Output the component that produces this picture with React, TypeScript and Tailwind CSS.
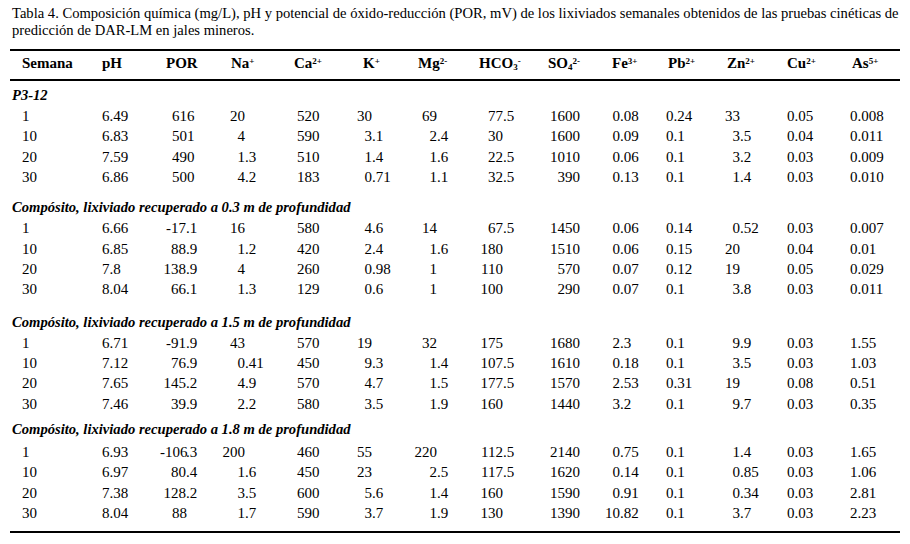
import type { ReactNode } from "react";

type Col = {
  head: ReactNode;
  headCls: string;
  // "left": plain left aligned cell; "dec": integer part right aligned in a box (decimal tab)
  mode: "left" | "dec";
  cellCls: string;
  intCls?: string;
  intLeftCls?: string;
};

const cols: Col[] = [
  { head: "Semana", headCls: "pl-[12px]", mode: "left", cellCls: "pl-[12px]" },
  { head: "pH", headCls: "pl-[7px]", mode: "left", cellCls: "pl-[7px]" },
  { head: "POR", headCls: "pl-[6px]", mode: "dec", cellCls: "", intCls: "w-[26px]", intLeftCls: "pl-[12px]" },
  { head: <>Na<sup className="text-[9px]">+</sup></>, headCls: "pl-[9px]", mode: "dec", cellCls: "", intCls: "w-[23px]" },
  { head: <>Ca<sup className="text-[9px]">2+</sup></>, headCls: "pl-[4px]", mode: "left", cellCls: "pl-[7px]" },
  { head: <>K<sup className="text-[9px]">+</sup></>, headCls: "pl-[13px]", mode: "dec", cellCls: "", intCls: "w-[22px]" },
  { head: <>Mg<sup className="text-[9px]">2-</sup></>, headCls: "pl-[8px]", mode: "dec", cellCls: "", intCls: "w-[27px]" },
  {
    head: <>HCO<sub className="text-[9px]">3</sub><sup className="text-[9px]">-</sup></>,
    headCls: "pl-[9px]",
    mode: "dec",
    cellCls: "",
    intCls: "w-[33px]",
  },
  {
    head: <>SO<sub className="text-[9px]">4</sub><sup className="text-[9px]">2-</sup></>,
    headCls: "pl-[8px]",
    mode: "dec",
    cellCls: "",
    intCls: "w-[40px]",
  },
  { head: <>Fe<sup className="text-[9px]">3+</sup></>, headCls: "pl-[12px]", mode: "dec", cellCls: "", intCls: "w-[20px]" },
  { head: <>Pb<sup className="text-[9px]">2+</sup></>, headCls: "pl-[8px]", mode: "left", cellCls: "pl-[6px]" },
  { head: <>Zn<sup className="text-[9px]">2+</sup></>, headCls: "pl-[7px]", mode: "dec", cellCls: "", intCls: "w-[20px]" },
  { head: <>Cu<sup className="text-[9px]">2+</sup></>, headCls: "pl-[7px]", mode: "left", cellCls: "pl-[7px]" },
  { head: <>As<sup className="text-[9px]">5+</sup></>, headCls: "pl-[12px]", mode: "left", cellCls: "pl-[10px]" },
];

const sections = [
  {
    title: "P3-12",
    wrap: "mt-[3px]",
    head: "h-[22px] leading-[22px]",
    rows: [
      ["1", "6.49", "616", "20", "520", "30", "69", "77.5", "1600", "0.08", "0.24", "33", "0.05", "0.008"],
      ["10", "6.83", "501", "4", "590", "3.1", "2.4", "30", "1600", "0.09", "0.1", "3.5", "0.04", "0.011"],
      ["20", "7.59", "490", "1.3", "510", "1.4", "1.6", "22.5", "1010", "0.06", "0.1", "3.2", "0.03", "0.009"],
      ["30", "6.86", "500", "4.2", "183", "0.71", "1.1", "32.5", "390", "0.13", "0.1", "1.4", "0.03", "0.010"],
    ],
  },
  {
    title: "Compósito, lixiviado recuperado a 0.3 m de profundidad",
    wrap: "mt-[9px]",
    head: "h-[22px] leading-[22px]",
    rows: [
      ["1", "6.66", "-17.1", "16", "580", "4.6", "14", "67.5", "1450", "0.06", "0.14", "0.52", "0.03", "0.007"],
      ["10", "6.85", "88.9", "1.2", "420", "2.4", "1.6", "180", "1510", "0.06", "0.15", "20", "0.04", "0.01"],
      ["20", "7.8", "138.9", "4", "260", "0.98", "1", "110", "570", "0.07", "0.12", "19", "0.05", "0.029"],
      ["30", "8.04", "66.1", "1.3", "129", "0.6", "1", "100", "290", "0.07", "0.1", "3.8", "0.03", "0.011"],
    ],
  },
  {
    title: "Compósito, lixiviado recuperado a 1.5 m de profundidad",
    wrap: "mt-[11px]",
    head: "h-[22px] leading-[22px]",
    rows: [
      ["1", "6.71", "-91.9", "43", "570", "19", "32", "175", "1680", "2.3", "0.1", "9.9", "0.03", "1.55"],
      ["10", "7.12", "76.9", "0.41", "450", "9.3", "1.4", "107.5", "1610", "0.18", "0.1", "3.5", "0.03", "1.03"],
      ["20", "7.65", "145.2", "4.9", "570", "4.7", "1.5", "177.5", "1570", "2.53", "0.31", "19", "0.08", "0.51"],
      ["30", "7.46", "39.9", "2.2", "580", "3.5", "1.9", "160", "1440", "3.2", "0.1", "9.7", "0.03", "0.35"],
    ],
  },
  {
    title: "Compósito, lixiviado recuperado a 1.8 m de profundidad",
    wrap: "mt-[4px]",
    head: "h-[24px] leading-[22px]",
    rows: [
      ["1", "6.93", "-106.3", "200", "460", "55", "220", "112.5", "2140", "0.75", "0.1", "1.4", "0.03", "1.65"],
      ["10", "6.97", "80.4", "1.6", "450", "23", "2.5", "117.5", "1620", "0.14", "0.1", "0.85", "0.03", "1.06"],
      ["20", "7.38", "128.2", "3.5", "600", "5.6", "1.4", "160", "1590", "0.91", "0.1", "0.34", "0.03", "2.81"],
      ["30", "8.04", "88", "1.7", "590", "3.7", "1.9", "130", "1390", "10.82", "0.1", "3.7", "0.03", "2.23"],
    ],
  },
];

const grid =
  "grid grid-cols-[85px_65px_62px_68px_60px_60px_60px_70px_60px_60px_60px_60px_60px_60px]";

function Cell({ col, value }: { col: Col; value: string }) {
  if (col.mode === "left") {
    return <div className={`whitespace-nowrap ${col.cellCls}`}>{value}</div>;
  }
  const dot = value.indexOf(".");
  if (dot < 0 && col.intLeftCls) {
    return <div className={`whitespace-nowrap ${col.intLeftCls}`}>{value}</div>;
  }
  const int = dot < 0 ? value : value.slice(0, dot);
  const frac = dot < 0 ? "" : value.slice(dot);
  return (
    <div className="whitespace-nowrap">
      <span className={`inline-block text-right ${col.intCls}`}>{int}</span>
      {frac}
    </div>
  );
}

export default function App() {
  return (
    <div className="min-h-screen w-[910px] bg-white text-black font-['Liberation_Serif',serif] text-[15px]">
      <p className="pl-[12px] pt-[5px] text-[14.6px] leading-[17px] whitespace-nowrap">
        Tabla 4. Composición química (mg/L), pH y potencial de óxido-reducción (POR, mV) de los lixiviados
        semanales obtenidos de las pruebas cinéticas de
        <br />
        predicción de DAR-LM en jales mineros.
      </p>

      <div className="ml-[10px] w-[890px] mt-[10px]">
        <div className="h-[2px] bg-black" />
        <div className={`${grid} h-[28px] leading-[24px] font-bold`}>
          {cols.map((c, i) => (
            <div key={i} className={`whitespace-nowrap ${c.headCls}`}>
              {c.head}
            </div>
          ))}
        </div>
        <div className="h-[2px] bg-black" />

        {sections.map((s) => (
          <div key={s.title} className={s.wrap}>
            <div className={`${s.head} pl-[2px] text-[14.6px] font-bold italic whitespace-nowrap`}>{s.title}</div>
            {s.rows.map((r, ri) => (
              <div key={ri} className={`${grid} h-[20.33px] leading-[20.33px]`}>
                {r.map((v, ci) => (
                  <Cell key={ci} col={cols[ci]} value={v} />
                ))}
              </div>
            ))}
          </div>
        ))}

        <div className="h-[2px] bg-black mt-[8px]" />
      </div>
    </div>
  );
}
